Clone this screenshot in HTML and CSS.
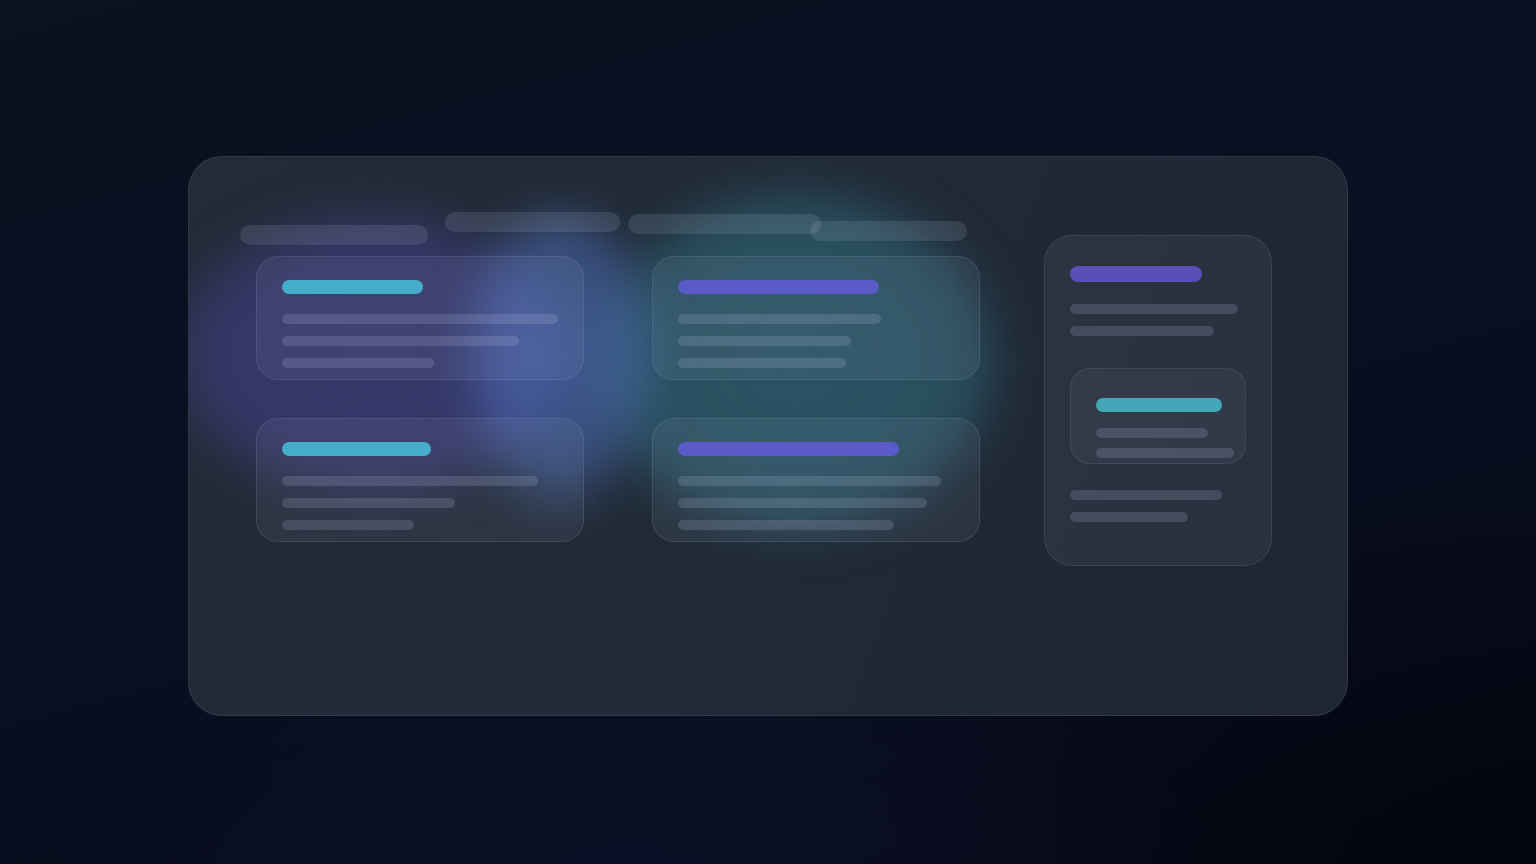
FILE: index.html
```html
<!DOCTYPE html>
<html lang="en">
<head>
<meta charset="utf-8">
<title>Dashboard skeleton</title>
<link rel="stylesheet" href="styles.css">
</head>
<body>
<div class="panel">
  <div class="glow glow-purple"></div>
  <div class="glow glow-teal"></div>
  <div class="glow glow-blue"></div>

  <div class="main">
    <div class="pills">
      <div class="pill pill-1"></div>
      <div class="pill pill-2"></div>
      <div class="pill pill-3"></div>
      <div class="pill pill-4"></div>
    </div>
    <div class="grid">
      <div class="card">
        <div class="title cyan" style="width:141px"></div>
        <div class="lines">
          <div class="line" style="width:276px"></div>
          <div class="line" style="width:237px"></div>
          <div class="line" style="width:152px"></div>
        </div>
      </div>
      <div class="card">
        <div class="title violet" style="width:201px"></div>
        <div class="lines">
          <div class="line" style="width:203px"></div>
          <div class="line" style="width:173px"></div>
          <div class="line" style="width:168px"></div>
        </div>
      </div>
      <div class="card">
        <div class="title cyan" style="width:149px"></div>
        <div class="lines">
          <div class="line" style="width:256px"></div>
          <div class="line" style="width:173px"></div>
          <div class="line" style="width:132px"></div>
        </div>
      </div>
      <div class="card">
        <div class="title violet" style="width:221px"></div>
        <div class="lines">
          <div class="line" style="width:263px"></div>
          <div class="line" style="width:249px"></div>
          <div class="line" style="width:216px"></div>
        </div>
      </div>
    </div>
  </div>

  <aside class="side">
    <div class="side-title"></div>
    <div class="side-lines">
      <div class="line" style="width:168px"></div>
      <div class="line" style="width:144px"></div>
    </div>
    <div class="inner">
      <div class="inner-title"></div>
      <div class="inner-lines">
        <div class="line" style="width:112px"></div>
        <div class="line" style="width:138px"></div>
      </div>
    </div>
    <div class="side-lines bottom">
      <div class="line" style="width:152px"></div>
      <div class="line" style="width:118px"></div>
    </div>
  </aside>
</div>
</body>
</html>
```

FILE: styles.css
```css
* { box-sizing: border-box; }

html, body { height: 100%; }

body {
  margin: 0;
  width: 1536px;
  height: 864px;
  overflow: hidden;
  font-family: "Inter", "Liberation Sans", sans-serif;
  background:
    radial-gradient(ellipse 600px 300px at 650px 900px, rgba(18, 22, 56, 0.45), rgba(18, 22, 56, 0) 100%),
    radial-gradient(ellipse 600px 380px at 1536px 864px, rgba(1, 3, 10, 0.55), rgba(1, 3, 10, 0) 100%),
    linear-gradient(165deg, #0a1120 0%, #081022 45%, #070c1c 75%, #050812 100%);
  padding: 156px 0 0 188px;
}

.panel {
  position: relative;
  width: 1160px;
  height: 560px;
  border-radius: 34px;
  border: 1px solid rgba(150, 170, 200, 0.14);
  background:
    linear-gradient(110deg, #222b37 0%, #212a36 45%, #1f2533 100%);
  display: flex;
  align-items: flex-start;
  padding: 55px 0 0 51px;
  overflow: hidden;
}

.glow {
  position: absolute;
  z-index: 0;
  border-radius: 50%;
  pointer-events: none;
  filter: blur(22px);
}

.glow-purple {
  left: -30px;
  top: 48px;
  width: 400px;
  height: 300px;
  background: radial-gradient(ellipse at 55% 50%, rgba(80, 74, 170, 0.46) 0%, rgba(80, 74, 170, 0.40) 58%, rgba(80, 74, 170, 0) 72%);
}

.glow-teal {
  left: 392px;
  top: 22px;
  width: 430px;
  height: 365px;
  background: radial-gradient(ellipse at 50% 50%, rgba(52, 126, 146, 0.50) 0%, rgba(52, 126, 146, 0.44) 58%, rgba(52, 126, 146, 0) 71%);
}

.glow-blue {
  left: 268px;
  top: 55px;
  width: 205px;
  height: 310px;
  background: radial-gradient(ellipse at 50% 45%, rgba(84, 120, 204, 0.58) 0%, rgba(84, 120, 204, 0.46) 50%, rgba(84, 120, 204, 0) 71%);
}

.main, .side { position: relative; z-index: 1; }

.pills {
  display: flex;
  align-items: flex-start;
  height: 33px;
}

.pill {
  height: 20px;
  border-radius: 10px;
  background: rgba(200, 210, 235, 0.13);
}

.pill-1 { width: 188px; margin-top: 13px; }
.pill-2 { width: 175px; margin-left: 17px; }
.pill-3 { width: 193px; margin-left: 8px; margin-top: 2px; }
.pill-4 { width: 157px; margin-left: -11px; margin-top: 9px; }

.grid {
  display: grid;
  grid-template-columns: 328px 328px;
  column-gap: 68px;
  row-gap: 38px;
  margin: 11px 0 0 16px;
}

.card {
  height: 124px;
  border-radius: 22px;
  border: 1px solid rgba(170, 190, 220, 0.14);
  background: rgba(200, 210, 240, 0.07);
  padding: 23px 25px 0;
}

.title {
  height: 14px;
  border-radius: 7px;
}

.cyan { background: #45acc9; }
.violet { background: #5a5ac8; }

.lines {
  display: flex;
  flex-direction: column;
  gap: 12px;
  margin-top: 20px;
}

.line {
  height: 10px;
  border-radius: 5px;
  background: rgba(200, 210, 235, 0.17);
}

.side {
  width: 228px;
  height: 331px;
  margin: 23px 0 0 64px;
  border-radius: 28px;
  border: 1px solid rgba(170, 190, 220, 0.13);
  background: rgba(200, 210, 240, 0.065);
  padding: 30px 25px 0;
}

.side-title {
  width: 132px;
  height: 16px;
  border-radius: 8px;
  background: #5a4fb9;
}

.side-lines {
  display: flex;
  flex-direction: column;
  gap: 12px;
  margin-top: 22px;
}

.side-lines.bottom { margin-top: 26px; }

.inner {
  width: 176px;
  height: 96px;
  margin-top: 32px;
  border-radius: 20px;
  border: 1px solid rgba(170, 190, 220, 0.12);
  background: rgba(200, 210, 240, 0.05);
  padding: 29px 25px 0;
}

.inner-title {
  width: 126px;
  height: 14px;
  border-radius: 7px;
  background: #44a6b6;
}

.inner-lines {
  display: flex;
  flex-direction: column;
  gap: 10px;
  margin-top: 16px;
}
```
